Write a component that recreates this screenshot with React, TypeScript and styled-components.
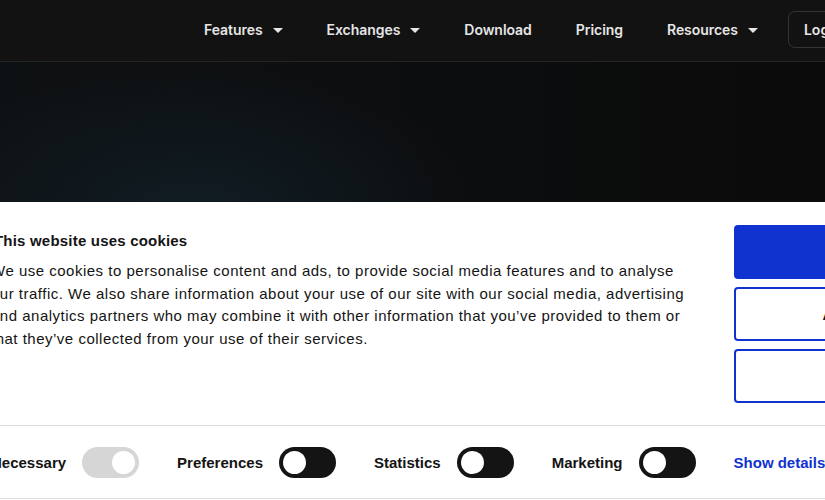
import React, { useState } from 'react';
import styled, { createGlobalStyle } from 'styled-components';

const GlobalStyle = createGlobalStyle`
  html, body {
    margin: 0;
    padding: 0;
    width: 825px;
    height: 500px;
    overflow: hidden;
    background: #0c0d0e;
  }
  * { box-sizing: border-box; }
`;

const Page = styled.div`
  width: 825px;
  height: 500px;
  display: flex;
  flex-direction: column;
`;

const NavBar = styled.nav`
  height: 62px;
  flex-shrink: 0;
  display: flex;
  align-items: center;
  padding-left: 204px;
  padding-bottom: 3px;
  gap: 44px;
  background: #121212;
  border-bottom: 1px solid #242424;
  font-family: Inter, "Noto Sans", sans-serif;
  font-size: 14px;
  font-weight: 600;
  color: #e6e6e6;
  white-space: nowrap;
  overflow: hidden;
  letter-spacing: -0.05px;
`;

const NavItem = styled.a`
  display: flex;
  align-items: center;
  gap: 10px;
`;

const Caret = styled.span`
  width: 0;
  height: 0;
  border-left: 5px solid transparent;
  border-right: 5px solid transparent;
  border-top: 5px solid #e6e6e6;
  margin-top: 2px;
`;

const LoginButton = styled.button`
  margin-left: -14px;
  height: 37px;
  padding: 0 15px;
  flex-shrink: 0;
  background: transparent;
  border: 1px solid #343434;
  border-radius: 7px;
  color: #e6e6e6;
  font: inherit;
`;

const Hero = styled.section`
  flex: 1;
  background:
    radial-gradient(ellipse 280px 150px at 200px 150px, rgba(20, 42, 54, 0.5), rgba(20, 42, 54, 0) 100%),
    linear-gradient(90deg, #0e1113 0%, #0c0d0e 60%, #0b0b0b 100%);
`;

const Banner = styled.div`
  position: fixed;
  top: 202px;
  bottom: 0;
  left: -30px;
  width: 1120px;
  background: #ffffff;
  color: #141414;
  font-family: "Liberation Sans", Arial, sans-serif;
  display: flex;
  flex-direction: column;
`;

const Top = styled.div`
  display: flex;
  gap: 43px;
  padding: 23px 24px 22px 21px;
`;

const TextColumn = styled.div`
  width: 700px;
`;

const Title = styled.h2`
  margin: 4px 0 0 3px;
  font-size: 15px;
  line-height: 24px;
  font-weight: 700;
  letter-spacing: 0.2px;
`;

const Body = styled.p`
  margin: 7px 0 0 0;
  font-size: 15px;
  line-height: 22.6px;
  letter-spacing: 0.5px;
`;

const ButtonColumn = styled.div`
  width: 286px;
  display: flex;
  flex-direction: column;
  gap: 8px;
`;

const ActionButton = styled.button<{ $primary?: boolean }>`
  height: 54px;
  border-radius: 4px;
  border: 2px solid #1032cf;
  background: ${({ $primary }) => ($primary ? '#1032cf' : '#ffffff')};
  color: ${({ $primary }) => ($primary ? '#ffffff' : '#141414')};
  font-family: inherit;
  font-size: 15px;
  font-weight: 700;
`;

const ToggleRow = styled.div`
  height: 74px;
  display: flex;
  align-items: center;
  gap: 38px;
  padding-left: 21px;
  border-top: 1px solid #dedede;
  border-bottom: 1px solid #dedede;
`;

const ToggleGroup = styled.label`
  display: flex;
  align-items: center;
  gap: 16px;
  font-size: 15px;
  font-weight: 700;
`;

const Track = styled.span<{ $on: boolean; $disabled?: boolean }>`
  width: 57px;
  height: 31px;
  border-radius: 16px;
  padding: 4px;
  display: flex;
  justify-content: ${({ $on }) => ($on ? 'flex-end' : 'flex-start')};
  background: ${({ $disabled }) => ($disabled ? '#d6d6d6' : '#141414')};
`;

const Knob = styled.span`
  width: 23px;
  height: 23px;
  border-radius: 50%;
  background: #ffffff;
`;

const DetailsLink = styled.a`
  color: #1032cf;
  font-size: 15px;
  font-weight: 700;
`;

const navItems = [
  { label: 'Features', menu: true },
  { label: 'Exchanges', menu: true },
  { label: 'Download', menu: false },
  { label: 'Pricing', menu: false },
  { label: 'Resources', menu: true },
];

const App = () => {
  const [prefs, setPrefs] = useState({ Preferences: false, Statistics: false, Marketing: false });
  const toggle = (key: keyof typeof prefs) => setPrefs({ ...prefs, [key]: !prefs[key] });

  return (
    <Page>
      <GlobalStyle />
      <NavBar>
        {navItems.map((item) => (
          <NavItem key={item.label}>
            {item.label}
            {item.menu && <Caret />}
          </NavItem>
        ))}
        <LoginButton>Log In</LoginButton>
      </NavBar>
      <Hero />
      <Banner>
        <Top>
          <TextColumn>
            <Title>This website uses cookies</Title>
            <Body>
              We use cookies to personalise content and ads, to provide social media features and to analyse
              our traffic. We also share information about your use of our site with our social media, advertising
              and analytics partners who may combine it with other information that you’ve provided to them or
              that they’ve collected from your use of their services.
            </Body>
          </TextColumn>
          <ButtonColumn>
            <ActionButton $primary>Allow all</ActionButton>
            <ActionButton>Allow selection</ActionButton>
            <ActionButton>Deny</ActionButton>
          </ButtonColumn>
        </Top>
        <ToggleRow>
          <ToggleGroup>
            Necessary
            <Track $on $disabled>
              <Knob />
            </Track>
          </ToggleGroup>
          {(Object.keys(prefs) as (keyof typeof prefs)[]).map((key) => (
            <ToggleGroup key={key} onClick={() => toggle(key)}>
              {key}
              <Track $on={prefs[key]}>
                <Knob />
              </Track>
            </ToggleGroup>
          ))}
          <DetailsLink>Show details</DetailsLink>
        </ToggleRow>
      </Banner>
    </Page>
  );
};

export default App;
